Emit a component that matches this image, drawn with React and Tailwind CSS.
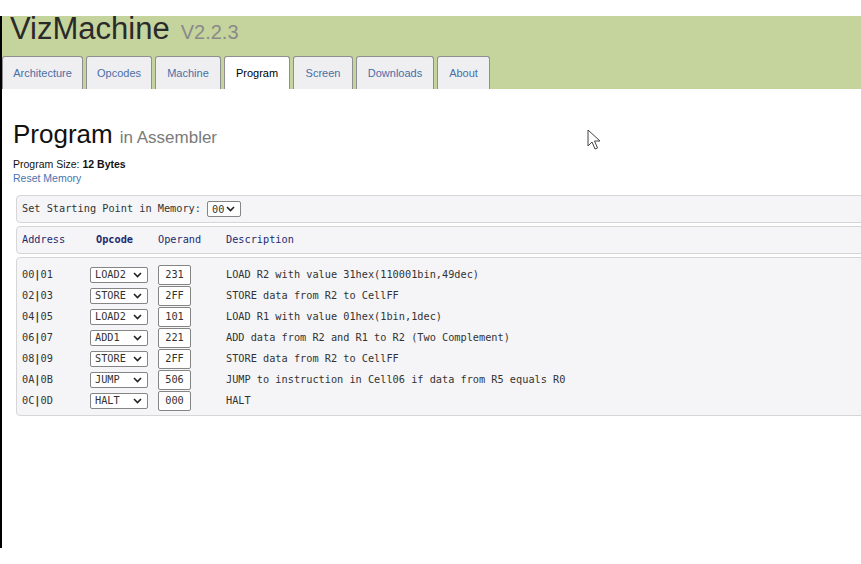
import React from 'react';

const tabs = [
  { label: 'Architecture', w: 'w-[81px]' },
  { label: 'Opcodes', w: 'w-[66px]' },
  { label: 'Machine', w: 'w-[66px]' },
  { label: 'Program', w: 'w-[66px]', active: true },
  { label: 'Screen', w: 'w-[60px]' },
  { label: 'Downloads', w: 'w-[78px]' },
  { label: 'About', w: 'w-[53px]' },
];

const rows = [
  ['00', '01', 'LOAD2', '231', 'LOAD R2 with value 31hex(110001bin,49dec)'],
  ['02', '03', 'STORE', '2FF', 'STORE data from R2 to CellFF'],
  ['04', '05', 'LOAD2', '101', 'LOAD R1 with value 01hex(1bin,1dec)'],
  ['06', '07', 'ADD1', '221', 'ADD data from R2 and R1 to R2 (Two Complement)'],
  ['08', '09', 'STORE', '2FF', 'STORE data from R2 to CellFF'],
  ['0A', '0B', 'JUMP', '506', 'JUMP to instruction in Cell06 if data from R5 equals R0'],
  ['0C', '0D', 'HALT', '000', 'HALT'],
];

function Chevron() {
  return (
    <svg width="9" height="6" viewBox="0 0 9 6" className="shrink-0">
      <path d="M1 1l3.5 3.5L8 1" fill="none" stroke="#222" strokeWidth="1.6" />
    </svg>
  );
}

function FakeSelect({ value, className }) {
  return (
    <div className={`h-[16px] border border-[#858585] rounded-[2px] bg-white flex items-center justify-between pl-[4px] pr-[5px] ${className}`}>
      <span className="leading-none">{value}</span>
      <Chevron />
    </div>
  );
}

function Cursor() {
  return (
    <svg width="14" height="22" viewBox="0 0 14 22" className="absolute left-[587px] top-[129px]">
      <path d="M1 1v16l4-4 3 7 2.5-1-3-7h5.5z" fill="#fff" stroke="#444" strokeWidth="1" strokeLinejoin="round" />
    </svg>
  );
}

export default function App() {
  return (
    <div className="relative w-[861px] h-[564px] bg-white overflow-hidden font-['Liberation_Sans',Arial,sans-serif] text-[#222]">
      <div className="pt-4">
        <div className="border-l-2 border-black h-[532px]">
          {/* Header */}
          <div className="bg-[#c5d49c] h-[73px] flex flex-col">
            <div className="h-[26px] flex items-baseline pl-[8px] leading-[26px]">
              <span className="text-[31px] text-[#2a2a2a]">VizMachine</span>
              <span className="text-[20px] text-[#8a8a8a] ml-[11px]">V2.2.3</span>
            </div>
            <div className="mt-auto flex gap-[3px] h-[33px]">
              {tabs.map((t) => (
                <div
                  key={t.label}
                  className={`${t.w} h-full border border-b-0 border-[#8f8f8f] rounded-t-[3px] flex items-center justify-center text-[11px] ${
                    t.active ? 'bg-white text-black' : 'bg-[#efeff2] text-[#4a6ea6]'
                  }`}
                >
                  {t.label}
                </div>
              ))}
            </div>
          </div>

          {/* Content */}
          <div className="pl-[11px]">
            <div className="mt-[30px] flex items-baseline leading-[30px]">
              <span className="text-[26px] text-[#111]">Program</span>
              <span className="text-[17px] text-[#7a7a7a] ml-[7px]">in Assembler</span>
            </div>
            <div className="mt-[4px] text-[10.5px] leading-[14px] text-[#111]">
              Program Size: <span className="font-bold">12 Bytes</span>
            </div>
            <div className="text-[10.5px] leading-[14px] text-[#4a74b0]">Reset Memory</div>

            <div className="ml-[3px] mt-[10px] w-[900px] flex flex-col gap-[3px] font-['DejaVu_Sans_Mono','Liberation_Mono',monospace] text-[10.25px]">
              <div className="h-[28px] border border-[#d6d6d6] rounded-[4px] bg-[#f5f5f7] flex items-center pl-[5px] text-[#333]">
                <span>Set Starting Point in Memory:</span>
                <FakeSelect value="00" className="ml-[6px] w-[34px]" />
              </div>

              <div className="h-[28px] border border-[#d6d6d6] rounded-[4px] bg-[#f5f5f7] flex items-center pl-[5px] text-[#1e2a6e]">
                <span className="w-[74px]">Address</span>
                <span className="w-[62px] font-semibold">Opcode</span>
                <span className="w-[68px]">Operand</span>
                <span>Description</span>
              </div>

              <div className="border border-[#d6d6d6] rounded-[4px] bg-[#f5f5f7] pt-[6px] pb-[4px] pl-[5px] text-[#333]">
                {rows.map(([a, b, op, val, desc]) => (
                  <div key={a} className="h-[21px] flex items-center">
                    <span className="w-[68px]">
                      {a}<span className="font-bold">|</span>{b}
                    </span>
                    <FakeSelect value={op} className="w-[58px]" />
                    <div className="ml-[10px] w-[33px] h-[20px] border border-[#858585] rounded-[2px] bg-white flex items-center justify-center">
                      {val}
                    </div>
                    <span className="ml-[35px]">{desc}</span>
                  </div>
                ))}
              </div>
            </div>
          </div>
        </div>
      </div>
      <Cursor />
    </div>
  );
}
